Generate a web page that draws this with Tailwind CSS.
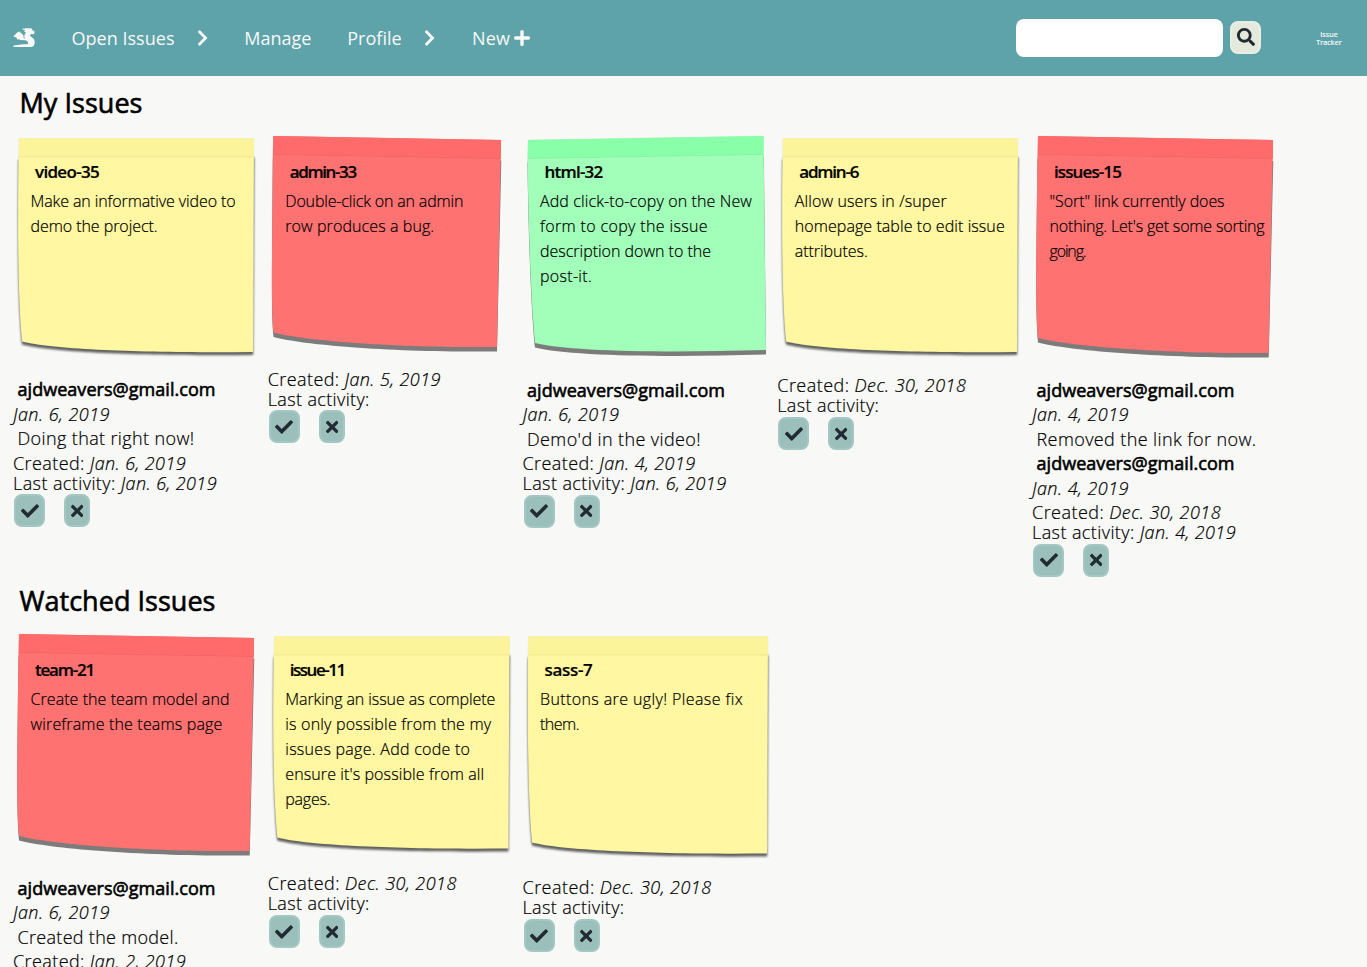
<!DOCTYPE html>
<html lang="en">
<head>
<meta charset="utf-8">
<title>Issue Tracker</title>
<script src="https://cdn.jsdelivr.net/npm/@tailwindcss/browser@4"></script>
</head>
<body class="h-[967px] overflow-hidden bg-[#f8f8f6] font-['Open_Sans',sans-serif] text-black">
<svg class="hidden">
  <symbol id="check" viewBox="0 0 512 512"><path d="M173.898 439.404l-166.4-166.4c-9.997-9.997-9.997-26.206 0-36.204l36.203-36.204c9.997-9.998 26.207-9.998 36.204 0L192 312.69 432.095 72.596c9.997-9.997 26.207-9.997 36.204 0l36.203 36.204c9.997 9.997 9.997 26.206 0 36.204l-294.4 294.401c-9.998 9.997-26.207 9.997-36.204-.001z"/></symbol>
  <symbol id="times" viewBox="0 0 352 512"><path d="M242.72 256l100.07-100.07c12.28-12.28 12.28-32.19 0-44.48l-22.24-22.24c-12.28-12.28-32.19-12.28-44.48 0L176 189.28 75.93 89.21c-12.28-12.28-32.19-12.28-44.48 0L9.21 111.45c-12.28 12.28-12.28 32.19 0 44.48L109.28 256 9.21 356.07c-12.28 12.28-12.28 32.19 0 44.48l22.24 22.24c12.28 12.28 32.2 12.28 44.48 0L176 322.72l100.07 100.07c12.28 12.28 32.2 12.28 44.48 0l22.24-22.24c12.28-12.28 12.28-32.19 0-44.48L242.72 256z"/></symbol>
  <symbol id="chevron" viewBox="0 0 320 512"><path d="M285.476 272.971L91.132 467.314c-9.373 9.373-24.569 9.373-33.941 0l-22.667-22.667c-9.357-9.357-9.375-24.522-.04-33.901L188.505 256 34.484 101.255c-9.335-9.379-9.317-24.544.04-33.901l22.667-22.667c9.373-9.373 24.569-9.373 33.941 0L285.475 239.03c9.373 9.372 9.373 24.568.001 33.941z"/></symbol>
  <filter id="soft" x="-5%" y="-5%" width="110%" height="115%"><feGaussianBlur stdDeviation="1.1"/></filter>
  <filter id="crisp" x="-5%" y="-5%" width="110%" height="115%"><feGaussianBlur stdDeviation="0.5"/></filter>
</svg>

<header class="flex h-19 items-center bg-[#5ea3aa] pl-3 text-[18px] text-[#f8f8f6]">
  <svg class="h-5 w-[24px] fill-[#f8f8f6]" viewBox="0 0 22 20"><path d="M9.500 0.500L11.500 0.800L12 0.200L18.300 0.200L19.300 2L21.500 3.600L21.500 5.300L20.600 6.300L18.500 5.900L17.500 6.300L17.200 8L19.500 9.800C22 11.500 22 14.500 21.400 16.500C20.700 18.400 19 19 17 19L0.800 19C0 18.600 0 17.800 0.900 17.500L10 16.300L14.500 16.200C15.400 15.900 15.200 14.600 14.700 13.800L12.600 12.300L6.800 12.100L6.200 11L4.200 11.700L3.600 9.400L0.200 8.500L3.800 4.800L6.300 3.600L10.500 7.300L10.600 10L12 11C11 9.500 11 8 11.900 6.300L13 4.300L10.800 3.900L12.300 2.500L10 1.800Z"/></svg>
  <nav class="flex items-center">
    <a class="ml-[35.500px] w-[125px]"><span data-w="103">Open Issues</span></a>
    <svg class="h-[18px] w-[11.250px] fill-current" viewBox="0 0 320 512"><use href="#chevron"/></svg>
    <a class="ml-[36.500px] w-[103px]"><span data-w="67">Manage</span></a>
    <a class="w-[77px]"><span data-w="54.500">Profile</span></a>
    <svg class="h-[18px] w-[11.250px] fill-current" viewBox="0 0 320 512"><use href="#chevron"/></svg>
    <a class="ml-[36.500px] flex items-center gap-1"><span data-w="38">New</span>
      <svg class="h-[18px] w-[16px] fill-current" viewBox="0 0 448 512"><path d="M416 208H272V64c0-17.670-14.330-32-32-32h-32c-17.670 0-32 14.330-32 32v144H32c-17.670 0-32 14.330-32 32v32c0 17.670 14.330 32 32 32h144v144c0 17.670 14.330 32 32 32h32c17.670 0 32-14.330 32-32V304h144c17.670 0 32-14.330 32-32v-32c0-17.670-14.330-32-32-32z"/></svg></a>
  </nav>
  <input class="mr-[7px] ml-auto h-[38px] w-[207px] rounded-lg bg-white px-2 outline-none" aria-label="Search">
  <button class="mb-0.5 flex h-[33px] w-[31px] items-center justify-center rounded-lg border-2 border-[#e9eee5] bg-[#e4e9dc]" aria-label="Search"><svg class="h-[18px] w-[18px] fill-[#222b33]" viewBox="0 0 512 512"><path d="M505 442.700L405.300 343c-4.500-4.500-10.600-7-17-7H372c27.600-35.300 44-79.700 44-128C416 93.100 322.900 0 208 0S0 93.100 0 208s93.100 208 208 208c48.300 0 92.700-16.400 128-44v16.300c0 6.400 2.500 12.500 7 17l99.700 99.700c9.400 9.400 24.600 9.400 33.900 0l28.300-28.300c9.400-9.400 9.400-24.600.1-34zM208 336c-70.700 0-128-57.200-128-128 0-70.700 57.200-128 128-128 70.700 0 128 57.200 128 128 0 70.700-57.200 128-128 128z"/></svg></button>
  <div class="mr-[25px] ml-[55px] w-[26px] pt-px text-center text-[7px] leading-2 [-webkit-text-stroke:0.200px_#f8f8f6]"><span data-w="17.500">Issue</span><br><span data-w="25.500">Tracker</span></div>
</header>

<main class="pl-[13px]">
  <h1 class="h-[50px] pt-[7px] pl-[6.500px] text-[27px] leading-10 [-webkit-text-stroke:0.600px_black]"><span data-w="123">My Issues</span></h1>
  <section id="mine" class="flex h-[458px] items-start"></section>
  <h1 class="h-[40px] pl-[6.500px] text-[27px] leading-[34px] [-webkit-text-stroke:0.600px_black]"><span data-w="196">Watched Issues</span></h1>
  <section id="watched" class="flex items-start"></section>
</main>

<script>
const colors = {
  y: { body: '#fff7a1', strip: '#fbf49b', shadow: '#606060', dy: 3, filter: 'soft' },
  r: { body: '#ff7272', strip: '#ff6b6b', shadow: '#7c7c7c', dy: 4.5, filter: 'crisp' },
  g: { body: '#a2ffb9', strip: '#8affaa', shadow: '#7c7c7c', dy: 4.5, filter: 'crisp' }
};
// Corners of each note: top-left, top-right, bottom-right, bottom-left
const shapes = {
  y: [6, 12.5, 241, 12.5, 240.2, 226, 9, 215.5],
  yShort: [6.2, 12.5, 241.5, 12.5, 240.5, 224.5, 9.3, 213.5],
  yWide: [5.5, 12.5, 245, 12.5, 244.2, 229.5, 9, 218.5],
  rSmall: [5.3, 10, 233, 14, 229, 221, 5.5, 206.5],
  r: [6, 10, 241, 14, 236.7, 227, 6, 212],
  g: [5, 14, 240.5, 10, 243, 224, 12, 217]
};
const noteSvg = (c, s) => {
  const k = colors[c], [ax, ay, bx, by, cx, cy, dx, dy] = shapes[s];
  const bulge = c === 'g' ? 6 : 4, dip = c === 'g' ? 2 : 0;
  const rest = `L${cx} ${cy}C${cx - 100} ${cy + 1 + dip} ${dx + 32} ${dy + 8.5} ${dx} ${dy}C${dx - 2.5} ${dy - 25} ${bulge} 140 ${ax - 0.5} ${ay + 18}`;
  return `<svg class="absolute inset-0 h-full w-full overflow-visible">
    <path d="M${ax} ${ay + 18}L${bx + .3} ${by + 16}${rest}Z" transform="translate(0 ${k.dy})" fill="${k.shadow}" filter="url(#${k.filter})"/>
    <path d="M${ax} ${ay}L${bx} ${by}${rest}Z" fill="${k.body}" stroke="#777" stroke-opacity=".12" stroke-width=".6"/>
    <path d="M${ax} ${ay}L${bx} ${by}V${by + 18.5}L${ax} ${ay + 18.5}Z" fill="${k.strip}"/>
    <path d="M${ax} ${ay + 18.5}L${bx} ${by + 18.5}" stroke="#000" stroke-opacity=".06"/>
  </svg>`;
};
const meta = (t, w) => `<div class="h-[20px] leading-[20px]"><span data-w="${w}">${t}</span></div>`;
const comment = ([d, m, w]) => `
  <div class="h-[24.500px] pl-[4.500px] leading-[24.500px] font-normal [-webkit-text-stroke:0.600px_black]"><span data-w="198">ajdweavers@gmail.com</span></div>
  <div class="h-[24.500px] leading-[24.500px] italic"><span data-w="97">${d}</span></div>
  ${m ? `<div class="h-[24.500px] pl-[4.500px] leading-[24.500px]"><span data-w="${w}">${m}</span></div>` : ''}`;
const card = n => `<article class="w-[254.750px] shrink-0 text-[18px] font-light [-webkit-text-stroke:0.200px_black]">
  <div class="relative" style="height:${n.h}px">${noteSvg(n.c, n.s)}
    <div class="relative pt-[33px] pl-[17.500px] whitespace-nowrap">
      <h2 class="mb-[5px] h-[25px] pl-[4.500px] text-[17px] leading-[25px] font-semibold"><span data-w="${n.t[1]}">${n.t[0]}</span></h2>
      ${n.l.map(([t, w]) => `<p class="h-[25px] text-[16px] leading-[25px]"><span data-w="${w}">${t}</span></p>`).join('')}
    </div>
  </div>
  <div class="whitespace-nowrap ${n.m.length ? 'pb-[2px]' : ''}">${n.m.map(comment).join('')}</div>
  ${meta(`Created: <i>${n.cr[0]}</i>`, n.cr[1])}
  ${meta(n.la ? `Last activity: <i>${n.la}</i>` : 'Last activity:', n.la ? 204 : 102)}
  <div class="flex gap-[19px] ${n.m.length ? 'pt-[1.800px]' : 'pt-[1.700px]'} pl-[1.200px]">
    <button class="flex h-[33px] w-[31px] items-center justify-center rounded-lg border-2 border-[#a3c7c2] bg-[#9bc0bb]" aria-label="Complete"><svg class="h-[18px] w-[18px] fill-[#222b33]" viewBox="0 0 512 512"><use href="#check"/></svg></button>
    <button class="flex h-[33px] w-[26px] items-center justify-center rounded-lg border-2 border-[#a3c7c2] bg-[#9bc0bb]" aria-label="Remove"><svg class="h-[18px] w-[12.400px] fill-[#222b33]" viewBox="0 0 352 512"><use href="#times"/></svg></button>
  </div></article>`;
const mine = [
  { c: 'y', s: 'y', h: 251, t: ['video-35', 64], l: [['Make an informative video to', 205], ['demo the project.', 127]], m: [['Jan. 6, 2019', 'Doing that right now!', 177]], cr: ['Jan. 6, 2019', 173], la: 'Jan. 6, 2019' },
  { c: 'r', s: 'rSmall', h: 242.5, t: ['admin-33', 66], l: [['Double-click on an admin', 178], ['row produces a bug.', 149]], m: [], cr: ['Jan. 5, 2019', 173] },
  { c: 'g', s: 'g', h: 251.5, t: ['html-32', 58], l: [['Add click-to-copy on the New', 212], ['form to copy the issue', 168], ['description down to the', 171], ['post-it.', 52]], m: [['Jan. 6, 2019', "Demo'd in the video!", 174]], cr: ['Jan. 4, 2019', 173], la: 'Jan. 6, 2019' },
  { c: 'y', s: 'y', h: 249.4, t: ['admin-6', 59], l: [['Allow users in /super', 152], ['homepage table to edit issue', 210], ['attributes.', 73]], m: [], cr: ['Dec. 30, 2018', 189] },
  { c: 'r', s: 'r', h: 251.5, t: ['issues-15', 67], l: [['"Sort" link currently does', 175], ["nothing. Let's get some sorting", 215], ['going.', 36]], m: [['Jan. 4, 2019', 'Removed the link for now.', 220], ['Jan. 4, 2019']], cr: ['Dec. 30, 2018', 189], la: 'Jan. 4, 2019' }
];
const watched = [
  { c: 'r', s: 'r', h: 251.5, t: ['team-21', 59], l: [['Create the team model and', 199], ['wireframe the teams page', 192]], m: [['Jan. 6, 2019', 'Created the model.', 161]], cr: ['Jan. 2, 2019', 173], la: 'Jan. 6, 2019' },
  { c: 'y', s: 'yShort', h: 249.4, t: ['issue-11', 55], l: [['Marking an issue as complete', 210], ['is only possible from the my', 206], ['issues page. Add code to', 185], ["ensure it's possible from all", 199], ['pages.', 45]], m: [], cr: ['Dec. 30, 2018', 189] },
  { c: 'y', s: 'yWide', h: 253.4, t: ['sass-7', 48], l: [['Buttons are ugly! Please fix', 203], ['them.', 39]], m: [], cr: ['Dec. 30, 2018', 189] }
];
document.getElementById('mine').innerHTML = mine.map(card).join('');
document.getElementById('watched').innerHTML = watched.map(card).join('');
// Track each line of text to its set width once styles and fonts are in
const fit = () => document.querySelectorAll('[data-w]').forEach(e => {
  e.style.display = 'inline-block';
  e.style.whiteSpace = 'nowrap';
  e.style.letterSpacing = '0px';
  const w = e.getBoundingClientRect().width;
  e.style.letterSpacing = (e.dataset.w - w) / e.textContent.length + 'px';
});
fit();
document.fonts.ready.then(fit);
addEventListener('load', () => { fit(); requestAnimationFrame(fit); setTimeout(fit, 60); });
</script>
</body>
</html>
